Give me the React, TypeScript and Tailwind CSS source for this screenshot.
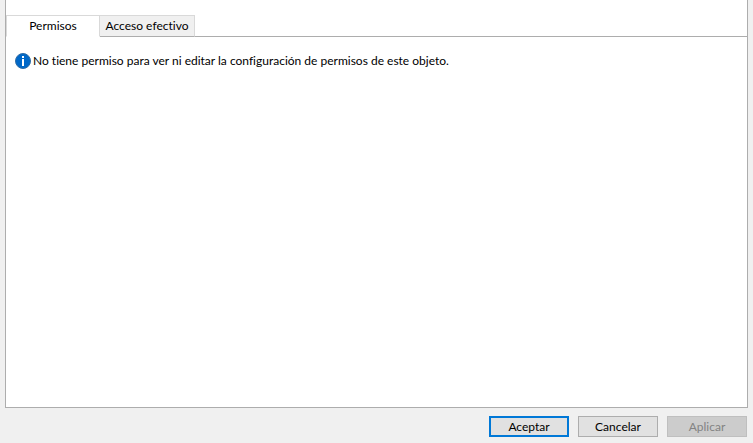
import React, { useState } from "react"
import { clsx } from "clsx"

type Tab = { id: string; label: string; width: string }

const tabs: Tab[] = [
  { id: "permisos", label: "Permisos", width: "w-[94px]" },
  { id: "acceso", label: "Acceso efectivo", width: "w-[95px]" },
]

function InfoIcon() {
  return (
    <svg className="w-4 h-4 shrink-0" viewBox="0 0 16 16" aria-hidden="true">
      <circle cx="8" cy="8" r="7.5" fill="#0068c8" stroke="#2f6da6" strokeWidth="1" />
      <rect x="7" y="3" width="2" height="2" fill="#fff" />
      <rect x="7" y="6" width="2" height="7" fill="#fff" />
    </svg>
  )
}

type DialogButtonProps = {
  label: string
  primary?: boolean
  disabled?: boolean
}

function DialogButton({ label, primary, disabled }: DialogButtonProps) {
  return (
    <button
      type="button"
      disabled={disabled}
      className={clsx(
        "flex items-center justify-center w-20 h-[21px]",
        primary && "border-2 border-[#0078d7] bg-[#e1e1e1]",
        !primary && !disabled && "border border-[#adadad] bg-[#e1e1e1]",
        disabled && "border border-[#bfbfbf] bg-[#cccccc] text-[#838383]"
      )}
    >
      {label}
    </button>
  )
}

export default function App() {
  const [active, setActive] = useState("permisos")

  return (
    <div className="flex flex-col min-h-screen px-[5px] bg-[#f0f0f0] text-black text-[12px] leading-4 font-['Lato','Open_Sans',sans-serif] [font-variant-ligatures:none]">
      <main className="flex flex-col flex-1 pt-[15px] bg-white border-x border-b border-[#adadad]">
        <div role="tablist" className="flex h-[22px]">
          {tabs.map((tab) => (
            <button
              key={tab.id}
              type="button"
              role="tab"
              aria-selected={active === tab.id}
              onClick={() => setActive(tab.id)}
              className={clsx(
                "flex items-center justify-center border-y border-r border-t-[#d9d9d9] border-r-[#d9d9d9] first:border-l first:border-l-[#d9d9d9] whitespace-nowrap",
                tab.width,
                active === tab.id ? "bg-white border-b-white" : "bg-[#f0f0f0] border-b-[#adadad]"
              )}
            >
              {tab.label}
            </button>
          ))}
          <div className="flex-1 border-b border-[#adadad]" />
        </div>
        <div role="tabpanel" className="flex items-center gap-[2px] px-[9px] pt-4">
          <InfoIcon />
          <p>
            {active === "permisos" && "No tiene permiso para ver ni editar la configuración de permisos de este objeto."}
          </p>
        </div>
      </main>
      <footer className="flex justify-end gap-[9px] pt-2 pb-[6px] pr-px">
        <DialogButton label="Aceptar" primary />
        <DialogButton label="Cancelar" />
        <DialogButton label="Aplicar" disabled />
      </footer>
    </div>
  )
}
